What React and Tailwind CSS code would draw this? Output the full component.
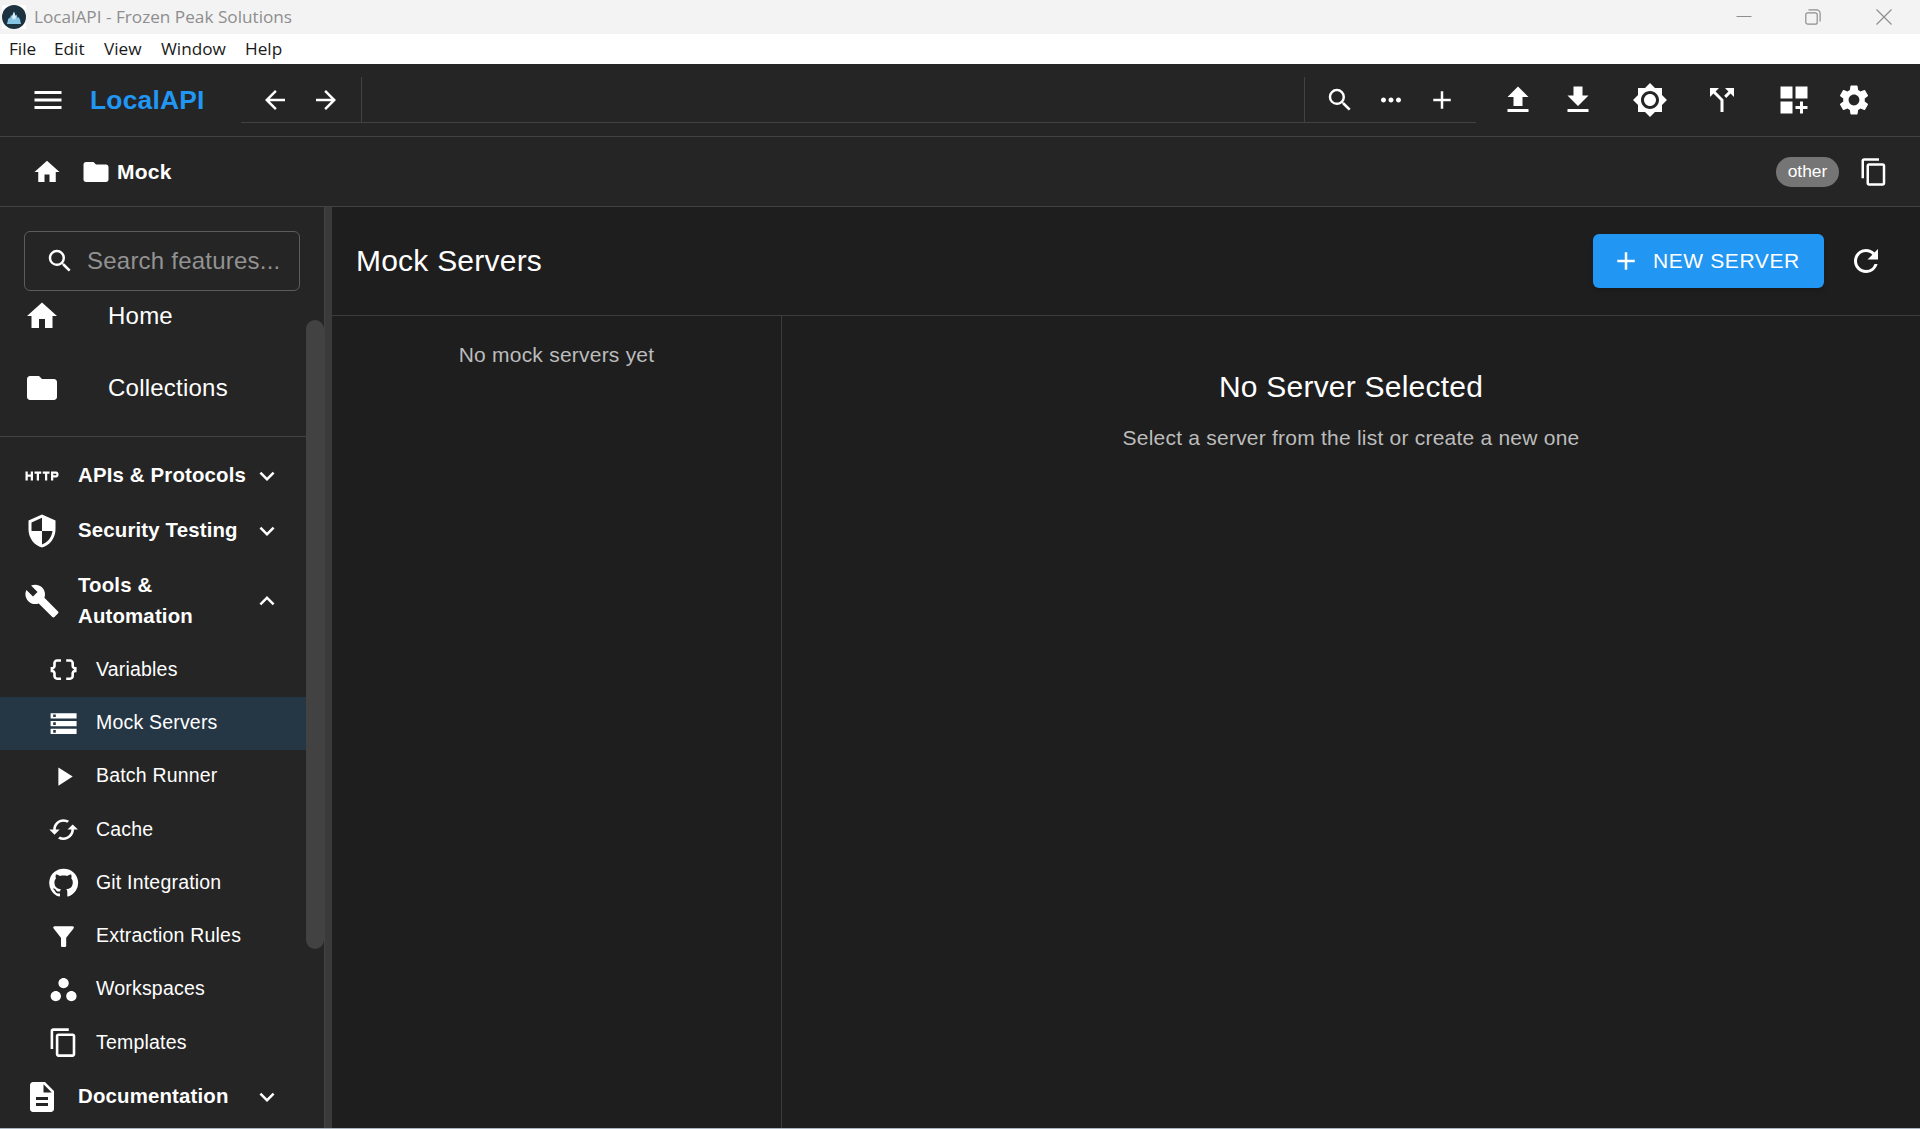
import React from "react";
import {
  MdMenu, MdArrowBack, MdArrowForward, MdSearch, MdMoreHoriz, MdAdd, MdBrightness7, MdCallSplit,
  MdDashboardCustomize, MdSettings, MdHome, MdFolder, MdContentCopy, MdHttp, MdSecurity, MdBuild,
  MdDataObject, MdStorage, MdPlayArrow, MdCached, MdFilterAlt, MdWorkspaces, MdDescription,
  MdExpandMore, MdExpandLess, MdRefresh,
} from "react-icons/md";

const glyph = (d) =>
  function Glyph({ className }) {
    return (
      <svg viewBox="0 0 24 24" fill="currentColor" className={className}>
        <path d={d} />
      </svg>
    );
  };

const Upload = glyph("M5 20h14v-2H5v2zm0-10h4v6h6v-6h4l-7-7-7 7z");
const Download = glyph("M5 20h14v-2H5v2zM19 9h-4V3H9v6H5l7 7 7-7z");
const GitHub = glyph(
  "M12 1.27a11 11 0 00-3.48 21.46c.55.09.73-.28.73-.55v-1.84c-3.03.64-3.67-1.46-3.67-1.46-.55-1.29-1.28-1.65-1.28-1.65-.92-.65.1-.65.1-.65 1.1 0 1.73 1.1 1.73 1.1.92 1.65 2.57 1.2 3.21.92a2 2 0 01.64-1.47c-2.47-.27-5.04-1.19-5.04-5.5 0-1.1.46-2.1 1.2-2.84a3.76 3.76 0 010-2.93s.91-.28 3.11 1.1c1.8-.49 3.7-.49 5.5 0 2.1-1.38 3.02-1.1 3.02-1.1a3.76 3.76 0 01.1 2.93c.83.74 1.2 1.74 1.2 2.94 0 4.21-2.57 5.13-5.04 5.4.45.37.82.92.82 2.02v3.03c0 .27.1.64.73.55A11 11 0 0012 1.27"
);

function TitleBar() {
  return (
    <div className="flex h-[34px] shrink-0 items-center bg-[#f3f3f3] pl-[2px] font-['Open_Sans',sans-serif] text-[#8e8e8e]">
      <svg viewBox="0 0 24 24" className="size-6">
        <rect width="24" height="24" fill="#fff" />
        <circle cx="12" cy="12" r="12" fill="#1c333f" />
        <path d="M5 19l1.200-5 1.300-1.500.5 1 1-3.500 1 1L12 6.500l1.500 4.500 1-1.500 1.300 3.500.8-1L18 14.500l1 4.500z" fill="#86c4e4" />
        <path d="M10 12l2-5 2 5-1 3-1-2-1 2z" fill="#d9f0fb" />
      </svg>
      <span className="ml-2 text-[17.2px] leading-6">LocalAPI - Frozen Peak Solutions</span>
      <div className="ml-auto flex items-center pr-[28px]">
        <svg viewBox="0 0 16 16" className="size-4" fill="none" stroke="currentColor">
          <path d="M0.500 7.500h15" />
        </svg>
        <svg viewBox="0 0 16 16" className="ml-[53px] size-4" fill="none" stroke="currentColor" strokeWidth="1.200">
          <rect x="0.800" y="3.800" width="11.400" height="11.400" rx="2" />
          <path d="M3.500 0.900h8a3.600 3.600 0 0 1 3.600 3.600v8" />
        </svg>
        <svg viewBox="0 0 16 16" className="ml-[55px] size-4" fill="none" stroke="currentColor" strokeWidth="1.200">
          <path d="M0.500 0.500l15 15M15.500 0.500l-15 15" />
        </svg>
      </div>
    </div>
  );
}

function MenuBar() {
  return (
    <div className="flex h-[30px] shrink-0 items-center bg-white pb-px pl-[9px] font-['Open_Sans',sans-serif] text-[17.2px] text-[#1a1a1a]">
      <span className="w-[45px]">File</span>
      <span className="w-[50px]">Edit</span>
      <span className="w-[57px]">View</span>
      <span className="w-[84px]">Window</span>
      <span>Help</span>
    </div>
  );
}

function AppHeader() {
  return (
    <header className="flex h-[73px] shrink-0 items-center border-b border-[#424242] bg-[#252525] pl-[30px] pr-12">
      <MdMenu className="size-9" />
      <h1 className="ml-6 w-[151px] pt-px text-[26.4px] font-bold tracking-[0.0075em] text-[#2196f3]">LocalAPI</h1>
      <div className="mt-[13px] flex h-[46px] w-[1235px] self-start border-b border-[#424242]">
        <div className="flex w-[121px] items-center gap-[20.5px] border-r border-[#424242] pl-[19px]">
          <MdArrowBack className="size-[30px]" />
          <MdArrowForward className="size-[30px]" />
        </div>
        <div className="grow" />
        <div className="flex w-[172px] items-center gap-[21px] border-l border-[#424242] pl-[20px]">
          <MdSearch className="size-[30px]" />
          <MdMoreHoriz className="size-[30px]" />
          <MdAdd className="size-[30px]" />
        </div>
      </div>
      <div className="ml-6 flex items-center">
        <Upload className="size-9" />
        <Download className="ml-6 size-9" />
        <MdBrightness7 className="ml-9 size-9" />
        <MdCallSplit className="ml-9 size-9" />
        <MdDashboardCustomize className="ml-9 size-9" />
        <MdSettings className="ml-6 size-9" />
      </div>
    </header>
  );
}

function Breadcrumbs() {
  return (
    <nav className="flex h-[70px] shrink-0 items-center border-b border-[#424242] bg-[#252525] pl-8 pr-[31px]">
      <MdHome className="size-[30px]" />
      <MdFolder className="ml-[19px] size-[30px]" />
      <span className="ml-1.5 text-[21px] font-bold tracking-[0.01071em]">Mock</span>
      <span className="ml-auto flex h-[30px] w-[63px] items-center justify-center rounded-full bg-[#757575] text-[17.4px]">
        other
      </span>
      <MdContentCopy className="ml-5 size-[30px]" />
    </nav>
  );
}

function Section({ icon: Icon, label, open, tall }) {
  const Chevron = open ? MdExpandLess : MdExpandMore;
  return (
    <div className={`flex shrink-0 items-center pl-6 ${tall ? "h-[85px]" : "h-[55px]"}`}>
      <Icon className="size-9" />
      <span className="ml-[18px] w-[174px] text-[20.4px] font-bold leading-[1.5] tracking-[0.008em]">{label}</span>
      <Chevron className="size-[30px]" />
    </div>
  );
}

const tools = [
  [MdDataObject, "Variables"],
  [MdStorage, "Mock Servers"],
  [MdPlayArrow, "Batch Runner"],
  [MdCached, "Cache"],
  [GitHub, "Git Integration"],
  [MdFilterAlt, "Extraction Rules"],
  [MdWorkspaces, "Workspaces"],
  [MdContentCopy, "Templates"],
];

function Sidebar() {
  return (
    <aside className="flex w-[324px] shrink-0 flex-col overflow-hidden bg-[#252525]">
      <div className="ml-6 mt-6 flex h-[60px] w-[276px] shrink-0 items-center rounded-[6px] border border-[#5c5c5c] pl-5">
        <MdSearch className="size-[30px]" />
        <span className="ml-3 text-[24px] tracking-[0.00938em] text-[#929292]">Search features...</span>
      </div>
      <div className="flex min-h-0 grow overflow-hidden">
        <div className="flex w-[306px] flex-col">
          <div className="-mt-[11px] flex h-[72px] shrink-0 items-center pl-6">
            <MdHome className="size-9" />
            <span className="ml-12 text-[24px] tracking-[0.00938em]">Home</span>
          </div>
          <div className="flex h-[72px] shrink-0 items-center pl-6">
            <MdFolder className="size-9" />
            <span className="ml-12 text-[24px] tracking-[0.00938em]">Collections</span>
          </div>
          <div className="mb-[11.25px] h-[13px] shrink-0 border-b border-[#424242]" />
          <Section icon={MdHttp} label="APIs & Protocols" />
          <Section icon={MdSecurity} label="Security Testing" />
          <Section icon={MdBuild} label={<>Tools &amp;<br />Automation</>} open tall />
          {tools.map(([Icon, label]) => (
            <div
              key={label}
              className={`flex h-[53.25px] shrink-0 items-center pl-[47.5px] ${label === "Mock Servers" ? "bg-[#253645]" : ""}`}
            >
              <Icon className="size-[31.2px]" />
              <span className="ml-[17.3px] pb-px text-[19.5px] tracking-[0.01em]">{label}</span>
            </div>
          ))}
          <Section icon={MdDescription} label="Documentation" />
        </div>
        <div className="mt-[29px] h-[629px] w-[18px] rounded-full bg-[#424242]" />
      </div>
    </aside>
  );
}

function MockServers() {
  return (
    <main className="flex grow flex-col bg-[#1e1e1e]">
      <div className="flex h-[109px] shrink-0 items-center border-b border-[#3c3c3c] pl-6 pr-9">
        <h2 className="pb-0.5 text-[30px] tracking-[0.0075em]">Mock Servers</h2>
        <button className="ml-auto flex h-[54px] w-[231px] items-center rounded-[6px] bg-[#2196f3] pl-[18px] text-[21px] tracking-[0.02857em] shadow-md">
          <MdAdd className="size-[30px]" />
          <span className="ml-3">NEW SERVER</span>
        </button>
        <MdRefresh className="ml-6 size-9" />
      </div>
      <div className="flex grow">
        <div className="w-[450px] border-r border-[#3c3c3c] pt-6 text-center text-[21px] leading-[30px] tracking-[0.01071em] text-[#bcbcbc]">
          No mock servers yet
        </div>
        <div className="grow pt-[47px] text-center">
          <h3 className="text-[30px] leading-[48px] tracking-[0.0075em]">No Server Selected</h3>
          <p className="mt-3 text-[21px] leading-[30px] tracking-[0.01071em] text-[#bcbcbc]">
            Select a server from the list or create a new one
          </p>
        </div>
      </div>
    </main>
  );
}

export default function App() {
  return (
    <div className="flex h-[1129px] w-[1920px] flex-col overflow-hidden border-b border-[#a9b4c0] bg-[#1e1e1e] font-['Liberation_Sans',Arial,sans-serif] text-white">
      <TitleBar />
      <MenuBar />
      <AppHeader />
      <Breadcrumbs />
      <div className="flex min-h-0 grow">
        <Sidebar />
        <div className="w-2 shrink-0 border-l border-[#424242] bg-[#3a3a3a]" />
        <MockServers />
      </div>
    </div>
  );
}
